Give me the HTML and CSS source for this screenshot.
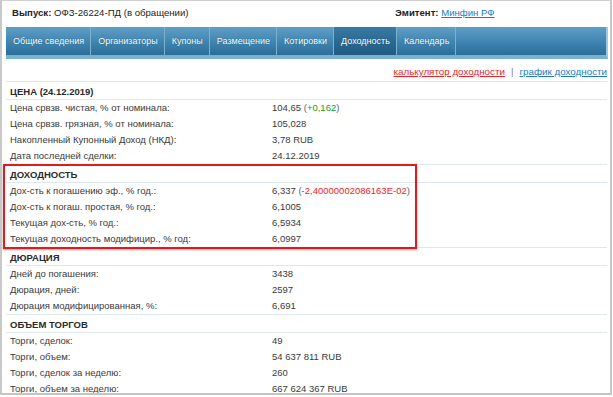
FILE: index.html
```html
<!DOCTYPE html>
<html lang="ru">
<head>
  <meta charset="UTF-8">
  <title>ОФЗ-26224-ПД</title>
  <link rel="stylesheet" href="styles.css">
</head>
<body>
  <div class="frame">
    <div class="top">
      <div class="issue"><b>Выпуск:</b> ОФЗ-26224-ПД (в обращении)</div>
      <div class="issuer"><b>Эмитент:</b> <a href="#">Минфин РФ</a></div>
    </div>

    <div class="tabs">
      <a class="tab" href="#">Общие сведения</a>
      <a class="tab" href="#">Организаторы</a>
      <a class="tab" href="#">Купоны</a>
      <a class="tab" href="#">Размещение</a>
      <a class="tab" href="#">Котировки</a>
      <a class="tab active" href="#">Доходность</a>
      <a class="tab" href="#">Календарь</a>
    </div>

    <div class="links">
      <a class="calc" href="#">калькулятор доходности</a>
      <span class="sep">|</span>
      <a class="chart" href="#">график доходности</a>
    </div>

    <div class="section">
      <div class="sec-head">ЦЕНА (24.12.2019)</div>
      <div class="row"><span class="label">Цена срвзв. чистая, % от номинала:</span><span class="value">104,65 <span class="par">(</span><span class="up">+0,162</span><span class="par">)</span></span></div>
      <div class="row"><span class="label">Цена срвзв. грязная, % от номинала:</span><span class="value">105,028</span></div>
      <div class="row"><span class="label">Накопленный Купонный Доход (НКД):</span><span class="value">3,78 RUB</span></div>
      <div class="row"><span class="label">Дата последней сделки:</span><span class="value">24.12.2019</span></div>
    </div>

    <div class="section">
      <div class="sec-head">ДОХОДНОСТЬ</div>
      <div class="row"><span class="label">Дох-сть к погашению эф., % год.:</span><span class="value">6,337 <span class="par">(</span><span class="down">-2,40000002086163E-02</span><span class="par">)</span></span></div>
      <div class="row"><span class="label">Дох-сть к погаш. простая, % год.:</span><span class="value">6,1005</span></div>
      <div class="row"><span class="label">Текущая дох-сть, % год.:</span><span class="value">6,5934</span></div>
      <div class="row"><span class="label">Текущая доходность модифицир., % год:</span><span class="value">6,0997</span></div>
    </div>

    <div class="section">
      <div class="sec-head">ДЮРАЦИЯ</div>
      <div class="row"><span class="label">Дней до погашения:</span><span class="value">3438</span></div>
      <div class="row"><span class="label">Дюрация, дней:</span><span class="value">2597</span></div>
      <div class="row"><span class="label">Дюрация модифицированная, %:</span><span class="value">6,691</span></div>
    </div>

    <div class="section">
      <div class="sec-head">ОБЪЕМ ТОРГОВ</div>
      <div class="row"><span class="label">Торги, сделок:</span><span class="value">49</span></div>
      <div class="row"><span class="label">Торги, объем:</span><span class="value">54 637 811 RUB</span></div>
      <div class="row"><span class="label">Торги, сделок за неделю:</span><span class="value">260</span></div>
      <div class="row"><span class="label">Торги, объем за неделю:</span><span class="value">667 624 367 RUB</span></div>
    </div>

    <div class="highlight"></div>
  </div>
</body>
</html>
```

FILE: styles.css
```css
body {
  margin: 0;
  font-family: "Liberation Sans", Arial, sans-serif;
  background: #fff;
  color: #3a3a3a;
}
.frame {
  position: relative;
  width: 608px;
  height: 392px;
  border-top: 1px solid #cfcfcf;
  border-left: 2px solid #c8c8c8;
  border-right: 2px solid #c8c8c8;
  border-bottom: 2px solid #c4c4c4;
  overflow: hidden;
}
.top {
  display: flex;
  align-items: center;
  height: 22px;
  padding: 0 0 4px 10px;
  font-size: 9.6px;
  color: #222;
}
.issue {
  width: 383px;
}
.issuer a {
  color: #1b7cc0;
}
.tabs {
  display: flex;
  margin-left: 4px;
  width: 600px;
  height: 28px;
  border-right: 2px solid #9dcbe5;
  border-bottom: 4px solid #78b1d2;
  background: linear-gradient(#5e9fc6, #3f84b0 55%, #2c6d98);
}
.tab {
  display: flex;
  align-items: center;
  padding: 0 6px 0 7px;
  border-right: 1px solid #7fb1cf;
  color: #fff;
  font-size: 9px;
  text-decoration: none;
  text-shadow: 0 0 1px #1d4f72;
}
.tab.active {
  background: linear-gradient(#3a7aa4, #2a6890 55%, #215b80);
}
.links {
  display: flex;
  justify-content: flex-end;
  gap: 6px;
  width: 605px;
  padding: 6px 0 2px;
  font-size: 9.8px;
  line-height: 14px;
}
.links .calc {
  color: #e3262a;
}
.links .chart {
  color: #1b7cc0;
}
.links .sep {
  color: #888;
}
.section {
  margin-left: 4px;
  width: 601px;
}
.sec-head {
  height: 17px;
  line-height: 19px;
  padding-left: 4px;
  border-top: 1px solid #dde7ee;
  border-bottom: 1px solid #dde7ee;
  font-size: 9.5px;
  font-weight: bold;
  color: #2a2a2a;
}
.row {
  display: flex;
  height: 16px;
  line-height: 16px;
  padding-left: 4px;
  font-size: 9.5px;
}
.label {
  width: 262px;
}
.par {
  color: #5b6670;
}
.up {
  color: #1a9a1a;
}
.down {
  color: #ee1c24;
}
.highlight {
  position: absolute;
  left: 1px;
  top: 163px;
  width: 410px;
  height: 81px;
  border: 2px solid #e01b1f;
  box-shadow: 0 1px 2px rgba(0, 0, 0, 0.35);
}
```
